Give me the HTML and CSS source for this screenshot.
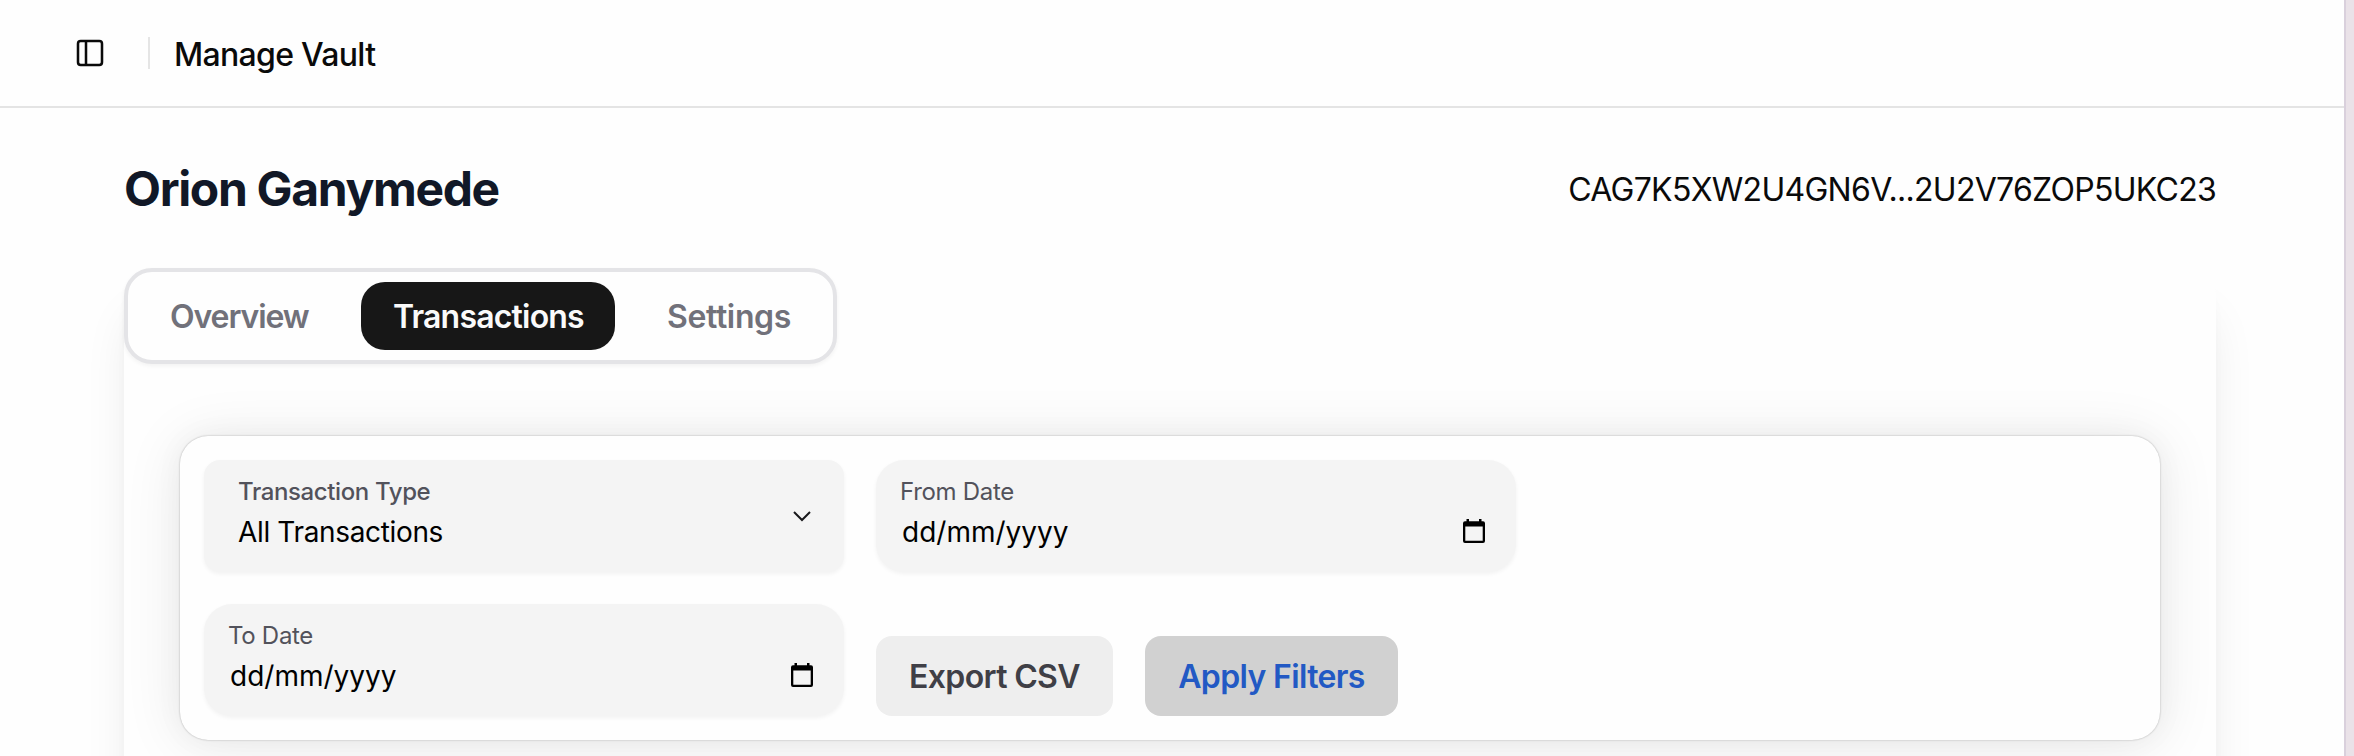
FILE: index.html
```html
<!DOCTYPE html>
<html lang="en">
<head>
  <meta charset="utf-8">
  <title>Manage Vault</title>
  <link rel="stylesheet" href="styles.css">
</head>
<body>
  <div class="app">
    <!-- Top bar -->
    <header class="topbar">
      <svg class="panel-icon" viewBox="0 0 24 24" fill="none" stroke="currentColor" stroke-width="1.9">
        <rect x="3" y="3" width="18" height="18" rx="2"/>
        <path d="M9 3v18"/>
      </svg>
      <span class="separator"></span>
      <span class="page-name">Manage Vault</span>
    </header>

    <main class="content">
      <div class="vault-head">
        <h1 class="vault-title">Orion Ganymede</h1>
        <span class="address">CAG7K5XW2U4GN6V...2U2V76ZOP5UKC23</span>
      </div>

      <section class="panel">
        <nav class="tabs">
          <a class="tab tab-overview">Overview</a>
          <a class="tab tab-active">Transactions</a>
          <a class="tab tab-settings">Settings</a>
        </nav>

        <!-- Filters -->
        <div class="filters">
          <div class="field field-select">
            <div>
              <div class="label label-select">Transaction Type</div>
              <div class="value value-select">All Transactions</div>
            </div>
            <svg class="chevron" viewBox="0 0 20 12" fill="none" stroke="#18181b" stroke-width="2">
              <path d="M2 2l8 8 8-8"/>
            </svg>
          </div>
          <div class="field">
            <div class="label">From Date</div>
            <div class="date-row">
              <span class="value">dd/mm/yyyy</span>
              <svg class="calendar" viewBox="0 0 22 24">
                <path d="M3.5 0h2.5v2.2h10V0h2.5v2.2H20a2 2 0 0 1 2 2V22a2 2 0 0 1-2 2H2a2 2 0 0 1-2-2V4.2a2 2 0 0 1 2-2h1.5zM2.3 7.5v14.2h17.4V7.5z" fill-rule="evenodd"/>
              </svg>
            </div>
          </div>
          <div class="field">
            <div class="label">To Date</div>
            <div class="date-row">
              <span class="value">dd/mm/yyyy</span>
              <svg class="calendar" viewBox="0 0 22 24">
                <path d="M3.5 0h2.5v2.2h10V0h2.5v2.2H20a2 2 0 0 1 2 2V22a2 2 0 0 1-2 2H2a2 2 0 0 1-2-2V4.2a2 2 0 0 1 2-2h1.5zM2.3 7.5v14.2h17.4V7.5z" fill-rule="evenodd"/>
              </svg>
            </div>
          </div>
          <div class="actions">
            <button class="btn btn-export">Export CSV</button>
            <button class="btn btn-apply">Apply Filters</button>
          </div>
        </div>
      </section>
    </main>
  </div>
</body>
</html>
```

FILE: styles.css
```css
* { box-sizing: border-box; }

body {
  margin: 0;
  height: 756px;
  overflow: hidden;
  background: #eae2e8;
  font-family: Inter, "Liberation Sans", sans-serif;
  color: #0a0a0a;
}

.app {
  width: 2346px;
  height: 756px;
  overflow: hidden;
  background: #fefefe;
  border-right: 2px solid #d9d0dc;
}

/* Top bar */
.topbar {
  display: flex;
  align-items: center;
  height: 108px;
  padding-left: 74px;
  border-bottom: 2px solid #e4e4e4;
}
.panel-icon { width: 32px; height: 32px; }
.separator { width: 2px; height: 32px; margin: 0 24px 0 42px; background: #e5e5e5; }
.page-name { padding-top: 3px; font-size: 32px; font-weight: 500; line-height: 48px; letter-spacing: -0.7px; }

.content { padding: 49px 128px 0 124px; }

.vault-head {
  display: flex;
  justify-content: space-between;
  align-items: center;
  height: 64px;
  margin-bottom: 47px;
}
.vault-title { margin: 0; font-size: 48px; font-weight: 700; line-height: 64px; letter-spacing: -1.35px; color: #111827; }
.address { padding-top: 1px; font-size: 32px; line-height: 48px; letter-spacing: -0.71px; }

.panel {
  height: 1000px;
  border-radius: 28px;
  background: #fefefe;
  box-shadow: 0 40px 50px -10px rgba(0, 0, 0, .1), 0 16px 20px -12px rgba(0, 0, 0, .1);
}

/* Tabs */
.tabs {
  display: flex;
  align-items: center;
  width: 713px;
  height: 96px;
  padding: 0 10px;
  border: 4px solid #e4e4e7;
  border-radius: 28px;
  background: #fefefe;
  box-shadow: 0 2px 4px rgba(0, 0, 0, .05);
}
.tab {
  display: flex;
  align-items: center;
  height: 68px;
  padding: 0 32px;
  border-radius: 24px;
  font-size: 32px;
  font-weight: 600;
  letter-spacing: -0.8px;
  color: #71717a;
}
.tab-overview { width: 223px; letter-spacing: -1.1px; }
.tab-active { width: 254px; background: #171717; color: #fafafa; }
.tab-settings { margin-left: 20px; letter-spacing: -0.35px; }

/* Filters card */
.filters {
  display: grid;
  grid-template-columns: 640px 640px;
  grid-template-rows: 112px 112px;
  gap: 32px;
  height: 304px;
  margin: 72px 56px 0;
  padding: 24px;
  border-radius: 28px;
  background: #fefefe;
  box-shadow: 0 0 30px rgba(0, 0, 0, .04), 0 4px 60px rgba(0, 0, 0, .09), 0 0 2px rgba(0, 0, 0, .3);
}
.field {
  padding: 16px 31px 0 24px;
  border-radius: 28px;
  background: #f4f4f4;
  box-shadow: 0 2px 4px rgba(0, 0, 0, .05);
}
.field-select {
  display: flex;
  justify-content: space-between;
  padding: 16px 32px 0 34px;
  border-radius: 16px;
}
.label { font-size: 24px; line-height: 32px; letter-spacing: -0.3px; color: #52525b; }
.label-select { font-weight: 550; letter-spacing: -0.38px; }
.value { font-size: 28px; line-height: 40px; color: #000; }
.value-select { margin-top: 4px; letter-spacing: -0.35px; }
.date-row {
  display: flex;
  justify-content: space-between;
  align-items: center;
  height: 40px;
  margin-top: 4px;
  padding-left: 2px;
}
.chevron { width: 20px; height: 12px; margin-top: 34px; }
.calendar { width: 22px; height: 24px; margin-bottom: 2px; }

.actions { display: flex; align-items: flex-end; gap: 32px; }
.btn {
  height: 80px;
  padding: 0;
  border: 0;
  border-radius: 16px;
  font-family: inherit;
  font-size: 32px;
  font-weight: 580;
  letter-spacing: -0.65px;
}
.btn-export { width: 237px; background: #eee; color: #3f3f46; }
.btn-apply { width: 253px; background: #d1d1d1; color: #2259c4; }
```
